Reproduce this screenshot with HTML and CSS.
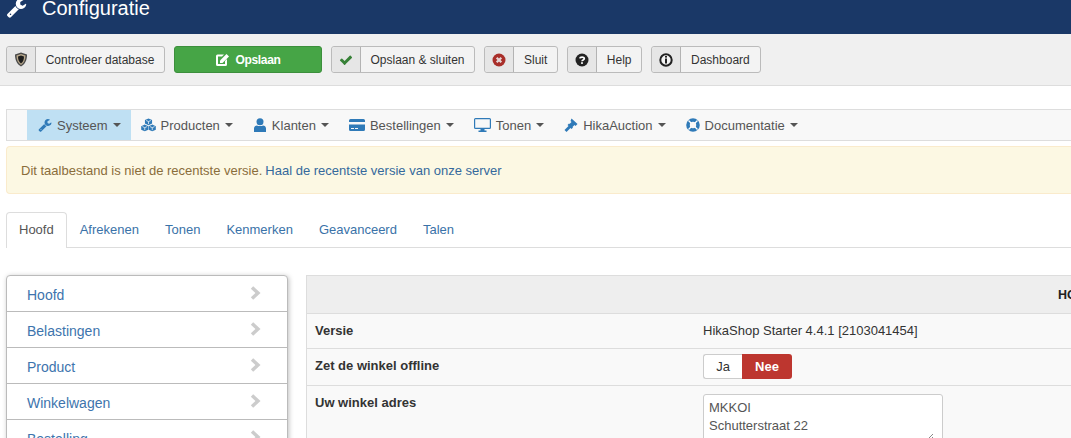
FILE: index.html
```html
<!DOCTYPE html>
<html lang="nl">
<head>
<meta charset="utf-8">
<title>Configuratie</title>
<link rel="stylesheet" href="styles.css">
</head>
<body>
<svg class="defs" width="0" height="0">
  <symbol id="wrench" viewBox="0 0 1792 1792"><path d="M448 1472q0-26-19-45t-45-19-45 19-19 45 19 45 45 19 45-19 19-45zm644-420l-682 682q-37 37-90 37-52 0-91-37l-106-107q-38-36-38-90 0-53 38-91l681-681q39 98 114.5 173.5t173.5 114.5zm634-435q0 39-23 106-47 134-164.5 217.5t-258.5 83.5q-185 0-316.5-131.5t-131.5-316.5 131.5-316.5 316.5-131.5q58 0 121.5 16.5t107.5 46.5q16 11 16 28t-16 28l-293 169v224l193 107q5-3 79-48.5t135.5-81 70.5-35.5q15 0 23.5 10t8.5 25z"/></symbol>
  <symbol id="chev" viewBox="0 0 14 16"><path d="M3.5 1.5 10.5 8l-7 6.5" fill="none" stroke="currentColor" stroke-width="4"/></symbol>
</svg>

<header class="topbar">
  <svg class="topicon"><use href="#wrench"/></svg>
  <h1>Configuratie</h1>
</header>

<div class="toolbar">
  <a class="btn"><span class="ico"><svg width="14" height="15" viewBox="0 0 14 15"><path d="M7 .5 13 2.5C13 8.500 11 12 7 14.500 3 12 1 8.500 1 2.500Z" fill="#4a4a4a"/><path d="M7 2 11.500 3.500C11.500 8 10 11 7 13 4 11 2.500 8 2.500 3.500Z" fill="#b8a88c"/><path d="M7 3.500 10 4.500C10 8 9 10 7 11.500 5 10 4 8 4 4.500Z" fill="#1c1c1c"/></svg></span><span class="lbl lbl-db">Controleer database</span></a>
  <a class="btn btn-save"><svg width="15" height="14" viewBox="0 0 15 14"><path d="M2.500 1.500H9L7 3.500H3V11H10V8L12 6V11.500A1.500 1.500 0 0 1 10.500 13H2.500A1.500 1.500 0 0 1 1 11.500V3A1.500 1.500 0 0 1 2.500 1.500Z" fill="#fff"/><path d="M5 7.500 11.500 1 14 3.500 7.500 10H5Z" fill="#fff"/></svg>Opslaan</a>
  <a class="btn"><span class="ico"><svg width="14" height="14" class="green" viewBox="0 0 1792 1792"><path fill="currentColor" d="M1671 566q0 40-28 68l-724 724-136 136q-28 28-68 28t-68-28l-136-136-362-362q-28-28-28-68t28-68l136-136q28-28 68-28t68 28l294 295 656-657q28-28 68-28t68 28l136 136q28 28 28 68z"/></svg></span><span class="lbl lbl-close">Opslaan &amp; sluiten</span></a>
  <a class="btn"><span class="ico"><svg width="14" height="14" viewBox="0 0 14 14"><circle cx="7" cy="7" r="6.500" fill="#a92f2a"/><path d="M4.700 4.700 9.300 9.300M9.300 4.700 4.700 9.300" stroke="#e6d5d5" stroke-width="2.200"/></svg></span><span class="lbl lbl-x">Sluit</span></a>
  <a class="btn"><span class="ico"><svg width="14" height="14" viewBox="0 0 14 14"><circle cx="7" cy="7" r="6.500" fill="#222"/><path d="M4.800 5.300C5 3.800 9.300 3.500 9.300 5.500 9.300 7 7 6.800 7 8.300" fill="none" stroke="#fff" stroke-width="1.700"/><rect x="6.100" y="9.200" width="1.800" height="1.700" fill="#fff"/></svg></span><span class="lbl lbl-help">Help</span></a>
  <a class="btn"><span class="ico"><svg width="14" height="14" viewBox="0 0 14 14"><circle cx="7" cy="7" r="5.700" fill="#f4f4f4" stroke="#222" stroke-width="2"/><rect x="6" y="5.500" width="2" height="5" fill="#222"/><rect x="6" y="3" width="2" height="1.600" fill="#222"/></svg></span><span class="lbl lbl-x">Dashboard</span></a>
</div>

<nav class="menu">
  <a class="item active"><svg class="mi"><use href="#wrench"/></svg>Systeem<i class="caret"></i></a>
  <a class="item"><svg class="mi mi-wide" viewBox="0 0 16 14"><path d="M8 0 11.800 1.700V5.500L8 7.200 4.200 5.500V1.700Z"/><path d="M4 6.500 7.800 8.200V12L4 13.700.2 12V8.200Z"/><path d="M12 6.500 15.800 8.200V12L12 13.700 8.200 12V8.200Z"/><path d="M5.500 2.200 8 3.300 10.500 2.200M8 3.300V6M1.500 8.700 4 9.800 6.500 8.700M4 9.800V12.500M9.500 8.700 12 9.800 14.500 8.700M12 9.800V12.500" fill="none" stroke="#f8f8f8" stroke-width=".8"/></svg>Producten<i class="caret"></i></a>
  <a class="item"><svg class="mi" viewBox="0 0 14 14"><circle cx="7" cy="3.700" r="3.500"/><path d="M1 14V10.500C1 8.500 2.500 7.500 4 7.500 5 8.300 9 8.300 10 7.500 11.500 7.500 13 8.500 13 10.500V14Z"/></svg>Klanten<i class="caret"></i></a>
  <a class="item"><svg class="mi mi-card" viewBox="0 0 16 14"><path d="M1.500 1H14.500A1.500 1.500 0 0 1 16 2.500V4H0V2.500A1.500 1.500 0 0 1 1.500 1ZM0 6.500H16V11.500A1.500 1.500 0 0 1 14.500 13H1.500A1.500 1.500 0 0 1 0 11.500ZM2 10V11H5V10ZM6 10V11H9V10Z" fill-rule="evenodd"/></svg>Bestellingen<i class="caret"></i></a>
  <a class="item"><svg class="mi mi-screen" viewBox="0 0 17 14"><path d="M1.500 0H15.500A1.500 1.500 0 0 1 17 1.500V9.500A1.500 1.500 0 0 1 15.500 11H10.500V12.500H12.500V14H4.500V12.500H6.500V11H1.500A1.500 1.500 0 0 1 0 9.500V1.500A1.500 1.500 0 0 1 1.500 0ZM1.200 1.200V9.800H15.800V1.200Z" fill-rule="evenodd"/></svg>Tonen<i class="caret"></i></a>
  <a class="item"><svg class="mi" viewBox="0 0 14 14"><path d="M7.500 .5 13.500 6 11.500 8 10.500 7 8.500 9 9 9.500 7.500 11 6.500 10 2.500 14 .5 12 4.500 8 3.500 7 5 5.500 5.500 6 7.500 4 6.500 3 Z"/></svg>HikaAuction<i class="caret"></i></a>
  <a class="item"><svg class="mi" viewBox="0 0 14 14"><circle cx="7" cy="7" r="5" fill="none" stroke="currentColor" stroke-width="3.600"/><path d="M2.500 2.500 5 5M11.500 2.500 9 5M2.500 11.500 5 9M11.500 11.500 9 9" stroke="#fff" stroke-width="1.300"/></svg>Documentatie<i class="caret"></i></a>
</nav>

<div class="alert">Dit taalbestand is niet de recentste versie. <a class="alert-link">Haal de recentste versie van onze server</a></div>

<ul class="tabs">
  <li class="tab current">Hoofd</li>
  <li class="tab">Afrekenen</li>
  <li class="tab">Tonen</li>
  <li class="tab">Kenmerken</li>
  <li class="tab">Geavanceerd</li>
  <li class="tab">Talen</li>
</ul>

<div class="content">
  <ul class="side">
    <li><a>Hoofd</a><svg class="chev"><use href="#chev"/></svg></li>
    <li><a>Belastingen</a><svg class="chev"><use href="#chev"/></svg></li>
    <li><a>Product</a><svg class="chev"><use href="#chev"/></svg></li>
    <li><a>Winkelwagen</a><svg class="chev"><use href="#chev"/></svg></li>
    <li><a>Bestelling</a><svg class="chev"><use href="#chev"/></svg></li>
  </ul>
  <section class="panel">
    <div class="panel-head">HOOFD</div>
    <div class="row row-v"><div class="key">Versie</div><div class="val">HikaShop Starter 4.4.1 [2103041454]</div></div>
    <div class="row row-o"><div class="key">Zet de winkel offline</div><div class="val"><span class="toggle"><span class="ja">Ja</span><span class="nee">Nee</span></span></div></div>
    <div class="row row-a"><div class="key">Uw winkel adres</div><div class="val"><div class="area">MKKOI<br>Schutterstraat 22<svg class="grip" width="8" height="8" viewBox="0 0 8 8"><path d="M1 7 7 1M4 7 7 4" stroke="#888" stroke-width="1"/></svg></div></div></div>
  </section>
</div>
</body>
</html>
```
FILE: styles.css
```css
* { box-sizing: border-box; }
html, body { margin: 0; height: 438px; overflow: hidden; }
body { font-family: "Liberation Sans", Arial, sans-serif; font-size: 12px; color: #333; background: #fff; }
.defs { position: absolute; }
ul { list-style: none; margin: 0; padding: 0; }

.topbar { height: 34px; background: #1a3867; color: #fff; display: flex; align-items: flex-start; padding-left: 6px; overflow: hidden; }
.topicon { width: 21px; height: 21px; fill: #fff; margin-top: -3px; flex: none; }
.topbar h1 { margin: -4px 0 0 15px; font-size: 20px; line-height: 24px; font-weight: 400; }

.toolbar { height: 52px; background: #f0f0f0; border-bottom: 1px solid #ddd; padding: 12px 6px 0; display: flex; gap: 9px; align-items: flex-start; }
.btn { height: 27px; display: flex; align-items: center; background: #f3f3f3; border: 1px solid #bbb; border-radius: 3px; color: #333; }
.ico { width: 29px; height: 25px; background: #e6e6e6; border-right: 1px solid #b3b3b3; border-radius: 3px 0 0 3px; display: flex; align-items: center; justify-content: center; flex: none; }
.green { color: #378137; }
.lbl { text-align: center; flex: none; }
.lbl-db { width: 128px; }
.lbl-close { width: 113px; }
.lbl-x { padding: 0 10px; }
.lbl-help { padding: 0 9.5px; }
.btn-save { width: 148px; background: #46a546; border-color: #3c8f3c; color: #fff; font-weight: 700; letter-spacing: -.3px; justify-content: center; gap: 5px; }

.menu { height: 32px; margin: 23px 0 0 6px; background: #f8f8f8; border: 1px solid #ddd; border-right: 0; padding-left: 20px; display: flex; align-items: stretch; }
.item { display: flex; align-items: center; padding: 0 10px; color: #555; font-size: 13px; }
.active { background: #bfe0f3; padding: 0 10px 0 11px; }
.mi { width: 14px; height: 14px; fill: #2f7ab8; color: #2f7ab8; margin-right: 5px; flex: none; }
.mi-wide { width: 15px; }
.mi-card { width: 16px; }
.mi-screen { width: 17px; }
.caret { width: 0; height: 0; margin-left: 5px; border-top: 4px solid #555; border-left: 4px solid transparent; border-right: 4px solid transparent; }

.alert { margin: 5px 0 0 6px; height: 48px; background: #fcf8e3; border: 1px solid #faebcc; border-right: 0; border-radius: 4px 0 0 4px; color: #8a6d3b; padding: 0 14px; display: flex; align-items: center; gap: 3px; font-size: 13px; }
.alert-link { color: #35699c; }

.tabs { margin: 18px 0 0 6px; height: 36px; border-bottom: 1px solid #ddd; display: flex; font-size: 13px; color: #3a72a8; }
.tab { height: 36px; padding: 0 12px; line-height: 34px; border: 1px solid transparent; border-bottom: 0; }
.current { background: #fff; border-color: #ddd; border-radius: 4px 4px 0 0; color: #555; }

.content { margin: 27px 0 0 6px; display: flex; align-items: flex-start; gap: 18px; width: 1600px; }
.side { width: 282px; flex: none; border: 1px solid #bbb; border-radius: 4px; box-shadow: 1px 1px 5px rgba(0,0,0,.25); background: #fff; }
.side li { height: 36px; display: flex; justify-content: space-between; padding: 0 26px 0 20px; border-bottom: 1px solid #bbb; font-size: 14px; color: #3d74ad; line-height: 38px; }
.chev { width: 12px; height: 16px; margin-top: 9px; color: #ccc; }

.panel { width: 1548px; flex: none; background: #f9f9f9; border: 1px solid #ddd; border-right: 0; }
.panel-head { height: 38px; background: #eee; border-bottom: 1px solid #ddd; text-align: center; line-height: 38px; font-size: 12.5px; font-weight: 700; color: #222; }
.row { display: flex; border-bottom: 1px solid #ddd; padding-left: 8px; }
.row-v { height: 35px; align-items: center; padding-bottom: 2px; }
.row-o { height: 37px; padding-top: 5px; }
.row-a { height: 100px; padding-top: 8px; border: 0; }
.key { width: 388px; flex: none; font-weight: 700; color: #333; font-size: 13px; }
.row-o .key { padding-top: 4px; }
.row-a .key { padding-top: 1px; }
.val { font-size: 13px; }
.toggle { display: flex; height: 25px; width: 89px; }
.ja { width: 39px; background: #fff; border: 1px solid #ccc; border-right: 0; border-radius: 3px 0 0 3px; display: flex; align-items: center; justify-content: center; }
.nee { width: 50px; background: #bd362f; color: #fff; font-weight: 700; border-radius: 0 3px 3px 0; display: flex; align-items: center; justify-content: center; }
.area { position: relative; width: 240px; height: 50px; background: #fff; border: 1px solid #ccc; border-radius: 3px; padding: 4px 5px; line-height: 18px; color: #555; }
.grip { position: absolute; right: 8px; bottom: 2px; }
```
